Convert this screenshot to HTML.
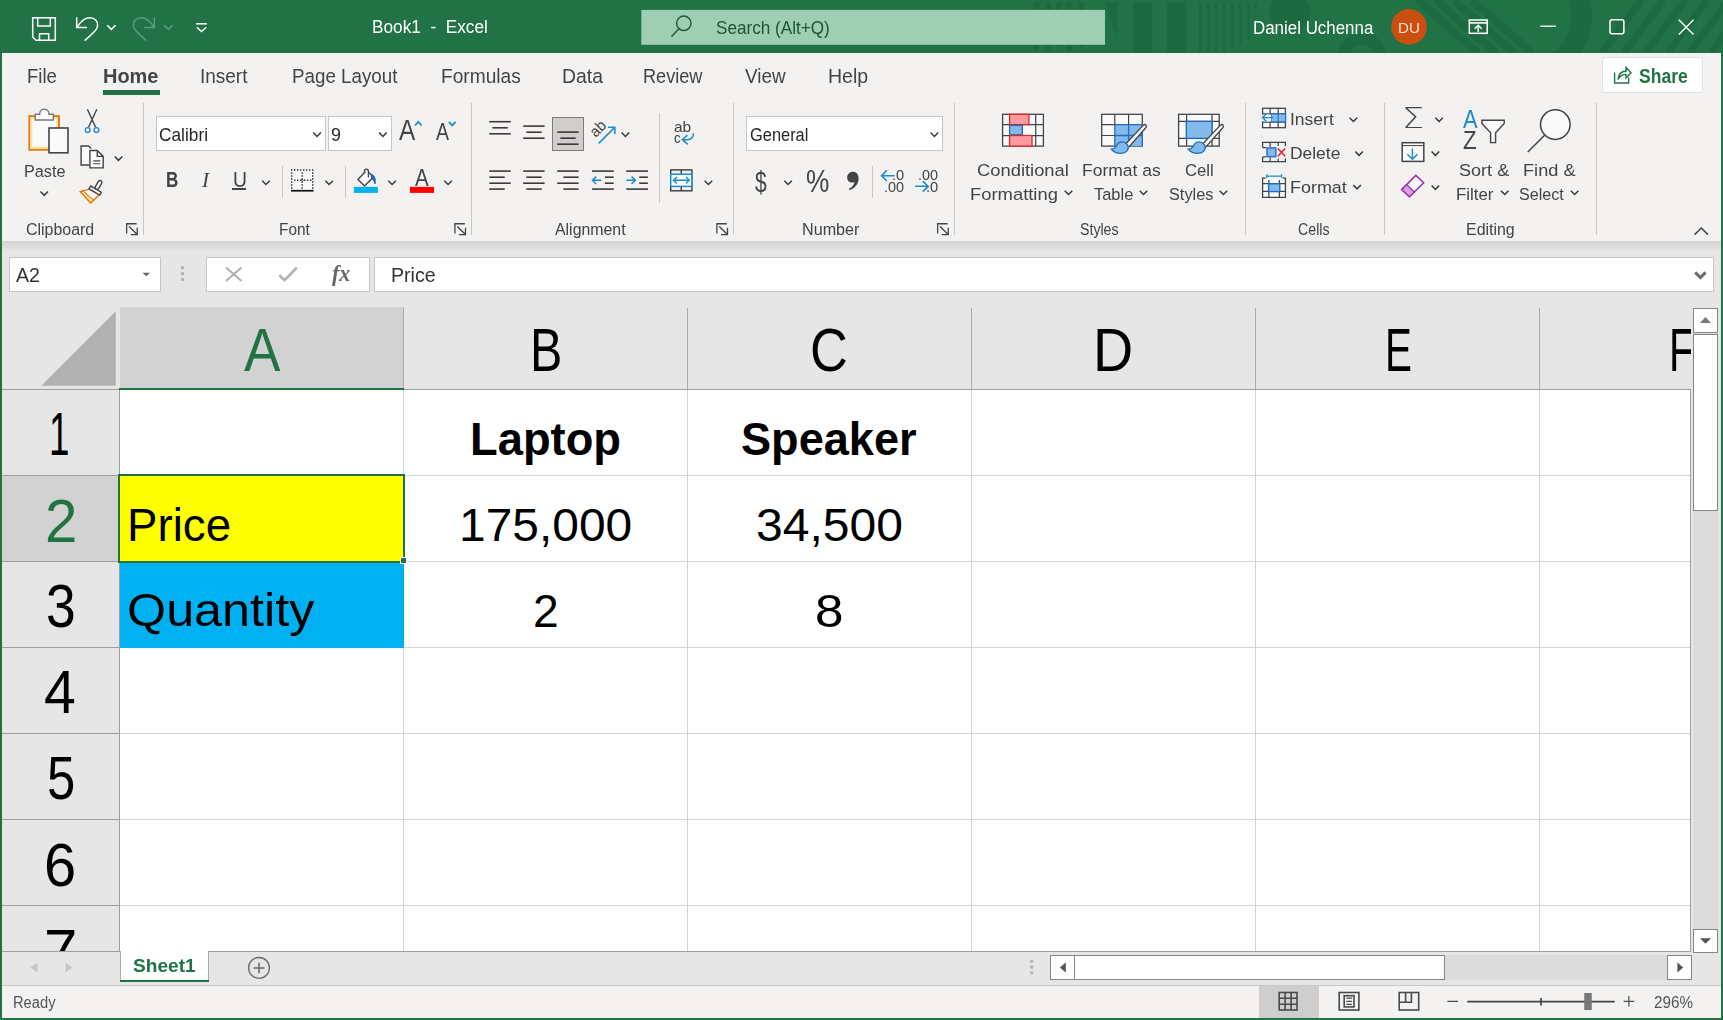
<!DOCTYPE html>
<html lang="en"><head><meta charset="utf-8"><title>Book1 - Excel</title>
<style>
html,body{margin:0;padding:0;}
body{width:1723px;height:1020px;overflow:hidden;position:relative;background:#e6e6e6;font-family:"Liberation Sans", sans-serif;}
.b{position:absolute;box-sizing:border-box;}
.t{position:absolute;white-space:pre;line-height:1;transform-origin:0 0;font-family:"Liberation Sans", sans-serif;}
svg.ov{position:absolute;left:0;top:0;}
.g{position:absolute;left:0;top:0;width:1723px;height:1020px;will-change:transform;}
</style></head><body>
<div class="b" style="left:0px;top:0px;width:1723px;height:53px;background:#217346;"></div>
<div class="b" style="left:0px;top:53px;width:1723px;height:188px;background:#f3f2f1;"></div>
<div class="b" style="left:0px;top:240.5px;width:1723px;height:10px;background:linear-gradient(#d2d2d2,#e6e6e6);"></div>
<div class="b" style="left:0px;top:250px;width:1723px;height:58px;background:#e6e6e6;"></div>
<div class="b" style="left:103px;top:90px;width:57px;height:5px;background:#217346;"></div>
<div class="b" style="left:1602px;top:57px;width:101px;height:36px;background:#ffffff;border:1px solid #e1dfdd;border-radius:3px;"></div>
<div class="b" style="left:143.0px;top:103px;width:1px;height:132px;background:#c8c6c4;"></div>
<div class="b" style="left:470.75px;top:103px;width:1px;height:132px;background:#c8c6c4;"></div>
<div class="b" style="left:732.75px;top:103px;width:1px;height:132px;background:#c8c6c4;"></div>
<div class="b" style="left:954.0px;top:103px;width:1px;height:132px;background:#c8c6c4;"></div>
<div class="b" style="left:1245.0px;top:103px;width:1px;height:132px;background:#c8c6c4;"></div>
<div class="b" style="left:1384.0px;top:103px;width:1px;height:132px;background:#c8c6c4;"></div>
<div class="b" style="left:1595.75px;top:103px;width:1px;height:132px;background:#c8c6c4;"></div>
<div class="b" style="left:156px;top:116px;width:170px;height:35px;background:#fff;border:1px solid #c8c6c4;"></div>
<div class="b" style="left:328px;top:116px;width:64px;height:35px;background:#fff;border:1px solid #c8c6c4;"></div>
<div class="b" style="left:232.1px;top:188.2px;width:13.9px;height:1.7px;background:#444444;"></div>
<div class="b" style="left:282px;top:166.25px;width:1px;height:31.25px;background:#c8c6c4;"></div>
<div class="b" style="left:345px;top:166.25px;width:1px;height:31.25px;background:#c8c6c4;"></div>
<div class="b" style="left:552px;top:117px;width:32px;height:34px;background:#d0cecc;border:1px solid #7d7b79;"></div>
<div class="b" style="left:659px;top:112.5px;width:1px;height:90px;background:#c8c6c4;"></div>
<div class="b" style="left:746px;top:116px;width:197px;height:35px;background:#fff;border:1px solid #c8c6c4;"></div>
<div class="b" style="left:872px;top:166.25px;width:1px;height:31.25px;background:#c8c6c4;"></div>
<div class="b" style="left:9px;top:257px;width:152px;height:35px;background:#fff;border:1px solid #c6c6c6;"></div>
<div class="b" style="left:206px;top:257px;width:164px;height:35px;background:#fff;border:1px solid #c6c6c6;"></div>
<div class="b" style="left:374px;top:257px;width:1340px;height:35px;background:#fff;border:1px solid #c6c6c6;"></div>
<div class="b" style="left:0px;top:307px;width:1723px;height:82px;background:#e6e6e6;"></div>
<div class="b" style="left:0px;top:389px;width:119px;height:563px;background:#e6e6e6;"></div>
<div class="b" style="left:119px;top:390px;width:1572px;height:561px;background:#fff;"></div>
<div class="b" style="left:119.5px;top:307px;width:284px;height:81px;background:#d2d2d2;"></div>
<div class="b" style="left:2px;top:476px;width:117px;height:85.5px;background:#d2d2d2;"></div>
<div class="b" style="left:403.0px;top:390px;width:1px;height:561px;background:#d4d4d4;"></div>
<div class="b" style="left:403.0px;top:307.5px;width:1px;height:82px;background:#ababab;"></div>
<div class="b" style="left:687.0px;top:390px;width:1px;height:561px;background:#d4d4d4;"></div>
<div class="b" style="left:687.0px;top:307.5px;width:1px;height:82px;background:#ababab;"></div>
<div class="b" style="left:971.0px;top:390px;width:1px;height:561px;background:#d4d4d4;"></div>
<div class="b" style="left:971.0px;top:307.5px;width:1px;height:82px;background:#ababab;"></div>
<div class="b" style="left:1255.0px;top:390px;width:1px;height:561px;background:#d4d4d4;"></div>
<div class="b" style="left:1255.0px;top:307.5px;width:1px;height:82px;background:#ababab;"></div>
<div class="b" style="left:1539.0px;top:390px;width:1px;height:561px;background:#d4d4d4;"></div>
<div class="b" style="left:1539.0px;top:307.5px;width:1px;height:82px;background:#ababab;"></div>
<div class="b" style="left:119px;top:474.8px;width:1572px;height:1px;background:#d4d4d4;"></div>
<div class="b" style="left:2px;top:474.8px;width:117px;height:1px;background:#9e9e9e;"></div>
<div class="b" style="left:119px;top:560.9px;width:1572px;height:1px;background:#d4d4d4;"></div>
<div class="b" style="left:2px;top:560.9px;width:117px;height:1px;background:#9e9e9e;"></div>
<div class="b" style="left:119px;top:646.9px;width:1572px;height:1px;background:#d4d4d4;"></div>
<div class="b" style="left:2px;top:646.9px;width:117px;height:1px;background:#9e9e9e;"></div>
<div class="b" style="left:119px;top:733.0px;width:1572px;height:1px;background:#d4d4d4;"></div>
<div class="b" style="left:2px;top:733.0px;width:117px;height:1px;background:#9e9e9e;"></div>
<div class="b" style="left:119px;top:819.0px;width:1572px;height:1px;background:#d4d4d4;"></div>
<div class="b" style="left:2px;top:819.0px;width:117px;height:1px;background:#9e9e9e;"></div>
<div class="b" style="left:119px;top:905.0px;width:1572px;height:1px;background:#d4d4d4;"></div>
<div class="b" style="left:2px;top:905.0px;width:117px;height:1px;background:#9e9e9e;"></div>
<div class="b" style="left:119.5px;top:476px;width:284.5px;height:86px;background:#ffff00;"></div>
<div class="b" style="left:119.5px;top:562px;width:284.5px;height:85.5px;background:#00b0f0;"></div>
<div class="b" style="left:2px;top:388.75px;width:1689px;height:1px;background:#9e9e9e;"></div>
<div class="b" style="left:118.75px;top:390px;width:1px;height:561px;background:#9e9e9e;"></div>
<div class="b" style="left:1690px;top:389px;width:1px;height:562.5px;background:#9e9e9e;"></div>
<div class="b" style="left:119.25px;top:387.5px;width:284.5px;height:2px;background:#217346;"></div>
<div class="b" style="left:118.25px;top:474.25px;width:286.25px;height:88.25px;border:2px solid #217346;"></div>
<div class="b" style="left:399.5px;top:557px;width:7px;height:7px;background:#217346;border:1px solid #fff;"></div>
<div class="b" style="left:0px;top:951.75px;width:1723px;height:34px;background:#e6e6e6;"></div>
<div class="b" style="left:2px;top:951px;width:1689px;height:1px;background:#9e9e9e;"></div>
<div class="b" style="left:120.25px;top:951px;width:88.5px;height:30.5px;background:#fff;border:1px solid #ababab;border-top:none;"></div>
<div class="b" style="left:120.25px;top:979.5px;width:88.5px;height:2px;background:#217346;"></div>
<div class="b" style="left:1050px;top:955px;width:642px;height:25px;background:#dcdcdc;"></div>
<div class="b" style="left:1050px;top:955px;width:25px;height:25px;background:#fff;border:1px solid #868686;"></div>
<div class="b" style="left:1074px;top:955px;width:371px;height:25px;background:#fff;border:1px solid #868686;"></div>
<div class="b" style="left:1667px;top:955px;width:25px;height:25px;background:#fff;border:1px solid #868686;"></div>
<div class="b" style="left:1691px;top:307px;width:29.5px;height:646px;background:#e6e6e6;"></div>
<div class="b" style="left:1693px;top:333px;width:25px;height:596px;background:#dcdcdc;"></div>
<div class="b" style="left:1693px;top:308px;width:25px;height:25px;background:#fff;border:1px solid #868686;"></div>
<div class="b" style="left:1693px;top:334px;width:25px;height:177px;background:#fff;border:1px solid #868686;"></div>
<div class="b" style="left:1693px;top:929px;width:25px;height:24px;background:#fff;border:1px solid #868686;"></div>
<div class="b" style="left:0px;top:985.5px;width:1723px;height:35px;background:#f3f2f1;"></div>
<div class="b" style="left:0px;top:985px;width:1723px;height:1px;background:#c8c8c8;"></div>
<div class="b" style="left:1259px;top:986px;width:60px;height:32px;background:#d0cecd;"></div>
<div class="b" style="left:0px;top:53px;width:2px;height:967px;background:#217346;"></div>
<div class="b" style="left:1720.5px;top:53px;width:2.5px;height:967px;background:#217346;"></div>
<div class="b" style="left:0px;top:1017.5px;width:1723px;height:2.5px;background:#217346;"></div>
<svg class="ov" width="1723" height="1020" viewBox="0 0 1723 1020">
<clipPath id="tb"><rect x="0" y="0" width="1723" height="53"/></clipPath>
<g clip-path="url(#tb)" fill="#1e6a40"><rect x="1034" y="2" width="5.4" height="49"/><rect x="1045.8" y="2" width="5" height="49"/><rect x="1056" y="2" width="5.6" height="44"/><rect x="1066.2" y="2" width="5.6" height="49"/><rect x="1078" y="2" width="5.9" height="45"/><path d="M1104.3,2 H1117.3 V38 Z"/><rect x="1133" y="2" width="19.2" height="51"/><rect x="1167" y="2" width="19" height="51"/><rect x="1199" y="2" width="2.8" height="51"/><rect x="1206.9" y="2" width="2.9" height="51"/><rect x="1214.8" y="2" width="2.8" height="51"/><rect x="1223" y="2" width="2.6" height="51"/><rect x="1231" y="2" width="2.7" height="47"/><rect x="1239" y="2" width="2.7" height="43"/><rect x="1247.2" y="2" width="2.5" height="38"/><rect x="1255" y="2" width="2.5" height="7"/><circle cx="1290" cy="12" r="20.4"/></g>
<g clip-path="url(#tb)" fill="none" stroke="#1e6a40"><circle cx="1362" cy="58" r="19" stroke-width="12"/><path d="M1418,0 l60,53 M1436,0 l60,53 M1454,0 l60,53 M1472,0 l60,53" stroke-width="8"/><path d="M1560.6,-28.8 A58.5,58.5 0 0 1 1560.6,60.8" stroke-width="21"/><path d="M1602,53 l39.75,-53 M1623.8,53 l39.75,-53 M1645.6,53 l39.75,-53 M1667.4,53 l39.75,-53 M1689.2,53 l39.75,-53 M1711,53 l39.75,-53" stroke-width="7.2"/></g>
<rect x="641.3" y="9.9" width="463.7" height="34.9" fill="#9fceb4"/>
<g fill="none" stroke="#ffffff" stroke-width="1.5"><path d="M32.7,17.7 H55.3 V40.3 H36 L32.7,37 Z"/><path d="M37.7,17.7 V26 H50.3 V17.7"/><path d="M39.5,40.3 V33.7 H48.7 V40.3"/><path d="M76.7,17.3 V27.5 H87"/><path d="M77.2,27 C80.5,21.5 85,17.7 90,17.7 C95,17.7 97.6,21.5 97.6,25.2 C97.6,28.8 95.5,31 84.6,40.6"/><path d="M107.2,25.2 L111.4,29.4 L115.6,25.2"/><path d="M196,23.8 H207"/><path d="M196.8,27.3 L201.5,31.6 L206.2,27.3"/></g>
<g fill="none" stroke="#5e9c7b" stroke-width="1.5"><path d="M154.3,17.3 V27.5 H144"/><path d="M153.8,27 C150.5,21.5 146,17.7 141,17.7 C136,17.7 133.4,21.5 133.4,25.2 C133.4,28.8 135.5,31 146.4,40.6"/><path d="M164.2,25.2 L168.4,29.4 L172.6,25.2"/></g>
<g fill="none" stroke="#1f5c3d" stroke-width="1.5"><circle cx="683.8" cy="23.3" r="7.2"/><path d="M678.9,28.7 L671.4,36.8"/></g>
<circle cx="1409" cy="26.9" r="17.8" fill="#c9500f"/>
<g fill="none" stroke="#ffffff" stroke-width="1.5"><rect x="1469.3" y="20" width="17.9" height="13.3"/><path d="M1469.3,22.9 H1487.2" stroke-width="1.6"/><path d="M1478.2,32 V25.6 M1474.7,28.7 L1478.2,25.3 L1481.7,28.7" stroke-width="1.4"/><path d="M1540.3,26.2 H1555.9" stroke-width="1.3"/><rect x="1610" y="19.8" width="13.9" height="14" rx="2"/><path d="M1678.8,19.7 L1693.5,34.4 M1693.5,19.7 L1678.8,34.4" stroke-width="1.4"/></g>
<g fill="none" stroke="#217346" stroke-width="1.4"><path d="M1614.6,72.6 V83 H1628.6 V77.4"/><path d="M1618,79.5 C1618.5,74 1621.5,71.3 1626,71.3 V67.6 L1631,72.8 L1626,78 V74.4 C1622.5,74.4 1620,75.8 1618,79.5 Z"/></g>
<g fill="none" stroke="#444444" stroke-width="1.3"><path d="M126.65,233.6 V223.75 H136.6"/><path d="M129,226.5 L137,234.3 M137.25,227.8 V234.55 H130.7"/></g>
<g fill="none" stroke="#444444" stroke-width="1.3"><path d="M454.9,233.6 V223.75 H464.85"/><path d="M457.25,226.5 L465.25,234.3 M465.5,227.8 V234.55 H458.95"/></g>
<g fill="none" stroke="#444444" stroke-width="1.3"><path d="M716.9,233.6 V223.75 H726.85"/><path d="M719.25,226.5 L727.25,234.3 M727.5,227.8 V234.55 H720.95"/></g>
<g fill="none" stroke="#444444" stroke-width="1.3"><path d="M937.65,233.6 V223.75 H947.6"/><path d="M940,226.5 L948,234.3 M948.25,227.8 V234.55 H941.7"/></g>
<rect x="29.4" y="116.1" width="29.5" height="33.6" fill="#fafafa" stroke="#e07c10" stroke-width="2"/><rect x="31.3" y="118" width="25.7" height="29.8" fill="none" stroke="#fbe19a" stroke-width="2"/><path d="M35.2,120 V114.2 H39.6 C39.6,107.5 49,107.5 49,114.2 H53.4 V120 Z" fill="#fafafa" stroke="#7a7a7a" stroke-width="1.4"/><rect x="49" y="128" width="19" height="24.8" fill="#fafafa" stroke="#444444" stroke-width="1.6"/>
<path d="M40.45,191.45 L44.25,195.35 L48.05,191.45" fill="none" stroke="#3b3a39" stroke-width="1.5"/>
<g fill="none" stroke="#444444" stroke-width="1.4"><path d="M87.4,109.2 L95.6,127.2 M96.8,109.2 L88.6,127.2"/></g><g fill="#fff" stroke="#1e8bcd" stroke-width="1.4"><circle cx="87.7" cy="130" r="2.4"/><circle cx="96.5" cy="130" r="2.4"/></g>
<g fill="#fafafa" stroke="#444444" stroke-width="1.4"><path d="M89.3,165 H81.1 V146 H88.5 L91,148.6"/><path d="M89.9,150.5 H97.3 L103.2,156.4 V167.9 H89.9 Z"/><path d="M97.3,150.5 V156.4 H103.2" fill="none"/><path d="M93.3,160.9 H100.2 M93.3,163.7 H100.2" stroke-width="1.1"/></g>
<path d="M114.70,156.45 L118.50,160.35 L122.30,156.45" fill="none" stroke="#3b3a39" stroke-width="1.5"/>
<g transform="translate(95.2,190.6) rotate(30.7)"><path d="M-5.7,1.6 L-12.2,8.4 L2.4,13 L5.6,1.6 Z" fill="#fafafa" stroke="#e07c10" stroke-width="1.4"/><path d="M-10.2,6.4 C-5,7.4 -1,9 3.6,8.6 L2.4,13 L-12.2,8.4 Z" fill="#fbe19a" stroke="#e07c10" stroke-width="1.2"/><rect x="-6.2" y="-1.7" width="12.4" height="3.3" fill="#fafafa" stroke="#444444" stroke-width="1.4"/><rect x="-1.9" y="-11.4" width="3.8" height="9.7" rx="1.9" fill="#fafafa" stroke="#444444" stroke-width="1.4"/></g>
<path d="M313.30,132.55 L317.10,136.45 L320.90,132.55" fill="none" stroke="#3b3a39" stroke-width="1.5"/>
<path d="M379.10,132.55 L382.90,136.45 L386.70,132.55" fill="none" stroke="#3b3a39" stroke-width="1.5"/>
<path d="M415,125.5 L418.3,121.9 L421.6,125.5" fill="none" stroke="#1e8bcd" stroke-width="1.8"/>
<path d="M448.9,121.8 L452.2,125.4 L455.5,121.8" fill="none" stroke="#1e8bcd" stroke-width="1.8"/>
<path d="M262.10,180.65 L265.90,184.55 L269.70,180.65" fill="none" stroke="#3b3a39" stroke-width="1.5"/>
<rect x="291.7" y="170" width="21" height="19" fill="#fafafa"/><g fill="none" stroke="#2b2b2b" stroke-width="1.4" stroke-dasharray="1.4 1.6"><path d="M291,170 H313.6 M291.7,172.3 V189.4 M312.7,172.3 V189.4 M302.2,172.3 V189.4 M294,180.2 H301 M304,180.2 H312"/></g><path d="M300.9,180.2 L302.2,178.9 L303.5,180.2 L302.2,181.5 Z" fill="none" stroke="#2b2b2b" stroke-width="0.8"/><path d="M291,190.75 H313.6" stroke="#111" stroke-width="1.7"/>
<path d="M325.30,180.65 L329.10,184.55 L332.90,180.65" fill="none" stroke="#3b3a39" stroke-width="1.5"/>
<path d="M365.3,171.8 L357.9,179.4 L364.5,186 L373.5,177 L369,172.5" fill="#fafafa" stroke="#444444" stroke-width="1.4" stroke-linejoin="round"/><path d="M364.4,172.8 V171.3 C364.4,168.4 368.4,168.4 368.4,171.3 V177.5" fill="none" stroke="#444444" stroke-width="1.3"/><path d="M371.1,174.4 C374.4,174.6 376.2,179.4 375,184 C374.2,181 373,179.2 371.5,178.4 Z" fill="#1565b8" stroke="#1565b8" stroke-width="0.8"/><rect x="353.9" y="186.9" width="24" height="6" fill="#00b0f0"/>
<path d="M388.30,180.65 L392.10,184.55 L395.90,180.65" fill="none" stroke="#3b3a39" stroke-width="1.5"/>
<rect x="409.9" y="186.9" width="24.2" height="6" fill="#ff0000"/>
<path d="M444.30,180.65 L448.10,184.55 L451.90,180.65" fill="none" stroke="#3b3a39" stroke-width="1.5"/>
<path d="M489.30,121.7 H510.70" stroke="#3b3a39" stroke-width="1.6"/>
<path d="M492.40,127.8 H507.81" stroke="#3b3a39" stroke-width="1.6"/>
<path d="M489.30,133.8 H510.70" stroke="#3b3a39" stroke-width="1.6"/>
<path d="M523.20,126.1 H544.60" stroke="#3b3a39" stroke-width="1.6"/>
<path d="M526.30,132.2 H541.71" stroke="#3b3a39" stroke-width="1.6"/>
<path d="M523.20,138.2 H544.60" stroke="#3b3a39" stroke-width="1.6"/>
<path d="M557.20,132.1 H578.60" stroke="#3b3a39" stroke-width="1.6"/>
<path d="M560.30,138.2 H575.71" stroke="#3b3a39" stroke-width="1.6"/>
<path d="M557.20,144.2 H578.60" stroke="#3b3a39" stroke-width="1.6"/>
<path d="M598.7,143.4 L614.7,127.4 M608,127.3 H614.9 V134" fill="none" stroke="#1e8bcd" stroke-width="1.5"/>
<g transform="translate(595.8,138) rotate(-45)"><text x="0" y="0" font-family="Liberation Sans, sans-serif" font-size="15.5" fill="#444" textLength="16.2" lengthAdjust="spacingAndGlyphs">ab</text></g>
<path d="M621.60,132.55 L625.40,136.45 L629.20,132.55" fill="none" stroke="#3b3a39" stroke-width="1.5"/>
<path d="M693.3,133.2 C693.6,137.6 691,139.7 687.4,139.7 H682.6 M687.4,135.1 L682.3,139.7 L687.8,144.3" fill="none" stroke="#1e8bcd" stroke-width="1.5"/>
<path d="M489.30,171.1 H510.70" stroke="#3b3a39" stroke-width="1.6"/>
<path d="M489.30,177.2 H504.71" stroke="#3b3a39" stroke-width="1.6"/>
<path d="M489.30,183.2 H510.70" stroke="#3b3a39" stroke-width="1.6"/>
<path d="M489.30,189.1 H504.71" stroke="#3b3a39" stroke-width="1.6"/>
<path d="M523.20,171.1 H544.60" stroke="#3b3a39" stroke-width="1.6"/>
<path d="M526.30,177.2 H541.71" stroke="#3b3a39" stroke-width="1.6"/>
<path d="M523.20,183.2 H544.60" stroke="#3b3a39" stroke-width="1.6"/>
<path d="M526.30,189.1 H541.71" stroke="#3b3a39" stroke-width="1.6"/>
<path d="M557.20,171.1 H578.60" stroke="#3b3a39" stroke-width="1.6"/>
<path d="M563.41,177.2 H578.60" stroke="#3b3a39" stroke-width="1.6"/>
<path d="M557.20,183.2 H578.60" stroke="#3b3a39" stroke-width="1.6"/>
<path d="M563.41,189.1 H578.60" stroke="#3b3a39" stroke-width="1.6"/>
<path d="M592.10,171.1 H613.70" stroke="#3b3a39" stroke-width="1.6"/>
<path d="M592.10,189.1 H613.70" stroke="#3b3a39" stroke-width="1.6"/>
<path d="M604.84,177.2 H613.70" stroke="#3b3a39" stroke-width="1.6"/>
<path d="M604.84,183.2 H613.70" stroke="#3b3a39" stroke-width="1.6"/>
<path d="M592.6,180.3 H601.3 M596.2,176.6 L592.5,180.3 L596.2,184" fill="none" stroke="#1e8bcd" stroke-width="1.5"/>
<path d="M626.30,171.1 H647.90" stroke="#3b3a39" stroke-width="1.6"/>
<path d="M626.30,189.1 H647.90" stroke="#3b3a39" stroke-width="1.6"/>
<path d="M639.26,177.2 H647.90" stroke="#3b3a39" stroke-width="1.6"/>
<path d="M639.26,183.2 H647.90" stroke="#3b3a39" stroke-width="1.6"/>
<path d="M626.4,180.3 H635.2 M631.6,176.6 L635.3,180.3 L631.6,184" fill="none" stroke="#1e8bcd" stroke-width="1.5"/>
<g fill="none" stroke="#3b3a39" stroke-width="1.4"><rect x="670.7" y="169.9" width="21.2" height="20.9"/><path d="M681.3,169.9 V174 M681.3,186.6 V190.8"/></g><rect x="670.7" y="174.2" width="21.2" height="12.2" fill="#fafafa" stroke="#1e8bcd" stroke-width="1.5"/><path d="M673.6,180.3 H689.2 M676.8,177 L673.4,180.3 L676.8,183.6 M686,177 L689.4,180.3 L686,183.6" fill="none" stroke="#1e8bcd" stroke-width="1.4"/>
<path d="M704.60,180.65 L708.40,184.55 L712.20,180.65" fill="none" stroke="#3b3a39" stroke-width="1.5"/>
<path d="M930.60,132.55 L934.40,136.45 L938.20,132.55" fill="none" stroke="#3b3a39" stroke-width="1.5"/>
<path d="M784.30,180.65 L788.10,184.55 L791.90,180.65" fill="none" stroke="#3b3a39" stroke-width="1.5"/>
<path transform="translate(1,-6.9) scale(1,1.04)" d="M851.9,171.8 C855.4,171.8 857.6,174.4 857.6,178.2 C857.6,183.4 854.4,187.4 848.4,189.4 L847.8,188.2 C851.4,186.4 853.2,184.2 853.4,181.6 C852.8,182 852,182.2 851.2,182.2 C848.2,182.2 846.2,180 846.2,177.2 C846.2,174.2 848.6,171.8 851.9,171.8 Z" fill="#444444"/>
<path d="M881.6,175.7 H894.6 M886.9,170.4 L881.5,175.7 L886.9,181" fill="none" stroke="#1e8bcd" stroke-width="1.6"/>
<path d="M915,186.3 H928 M922.8,181.2 L928.2,186.4 L922.8,191.6" fill="none" stroke="#1e8bcd" stroke-width="1.6"/>
<g fill="#fafafa" stroke="#444444" stroke-width="1.3"><rect x="1002.6" y="114.3" width="40.8" height="31.8"/><path d="M1009.6,114.3 V146.1 M1022.2,114.3 V146.1 M1035.7,114.3 V146.1 M1002.6,124.6 H1043.4 M1002.6,135.5 H1043.4" fill="none" stroke-width="1.25"/></g><rect x="1009.6" y="114.3" width="19.3" height="10.3" fill="#ff9aa2" stroke="#d92b2b" stroke-width="1.3"/><rect x="1009.6" y="125.4" width="12.6" height="9.4" fill="#83b9eb" stroke="#1e6fc0" stroke-width="1.3"/><rect x="1009.6" y="135.5" width="22.4" height="10.6" fill="#ff9aa2" stroke="#d92b2b" stroke-width="1.3"/>
<path d="M1064.70,190.65 L1068.50,194.55 L1072.30,190.65" fill="none" stroke="#3b3a39" stroke-width="1.5"/>
<g fill="#fafafa" stroke="#444444" stroke-width="1.3"><rect x="1101.7" y="114.3" width="40.6" height="31.8"/></g><rect x="1114.8" y="124.6" width="27.5" height="21.5" fill="#83b9eb"/><path d="M1114.8,124.6 H1142.3 M1114.8,135.5 H1142.3 M1114.8,124.6 V146.1 M1128.6,124.6 V146.1 M1142.3,124.6 V146.1" fill="none" stroke="#1e6fc0" stroke-width="1.3"/><path d="M1114.8,114.3 V124.6 M1128.6,114.3 V124.6 M1101.7,124.6 H1114.8 M1101.7,135.5 H1114.8" fill="none" stroke="#444444" stroke-width="1.2"/>
<g transform="translate(0,0)"><path d="M1123.5,146.2 L1143.2,125.4 C1145.2,123.4 1147.6,125.6 1145.8,127.8 L1127,149.2 Z" fill="#fafafa" stroke="#444444" stroke-width="1.3"/><path d="M1111.4,149.2 C1115.5,149 1115.8,147 1117.2,144.6 C1119.4,141 1124.4,141.2 1127,144.2 C1129.8,147.6 1127.6,152.6 1122.2,153.2 C1118,153.7 1114,152.2 1111.4,149.2 Z" fill="#83b9eb" stroke="#1e6fc0" stroke-width="1.3"/></g>
<path d="M1139.70,190.65 L1143.50,194.55 L1147.30,190.65" fill="none" stroke="#3b3a39" stroke-width="1.5"/>
<g fill="#fafafa" stroke="#444444" stroke-width="1.3"><rect x="1178.6" y="114.3" width="40.6" height="31.8"/><path d="M1186.6,114.3 V146.1 M1212,114.3 V146.1 M1178.6,121.4 H1219.2 M1178.6,138.4 H1219.2" fill="none" stroke-width="1.25"/></g><rect x="1186.3" y="121.4" width="25.7" height="17" fill="#83b9eb" stroke="#1e6fc0" stroke-width="1.3"/>
<g transform="translate(77,0)"><path d="M1123.5,146.2 L1143.2,125.4 C1145.2,123.4 1147.6,125.6 1145.8,127.8 L1127,149.2 Z" fill="#fafafa" stroke="#444444" stroke-width="1.3"/><path d="M1111.4,149.2 C1115.5,149 1115.8,147 1117.2,144.6 C1119.4,141 1124.4,141.2 1127,144.2 C1129.8,147.6 1127.6,152.6 1122.2,153.2 C1118,153.7 1114,152.2 1111.4,149.2 Z" fill="#83b9eb" stroke="#1e6fc0" stroke-width="1.3"/></g>
<path d="M1219.60,190.65 L1223.40,194.55 L1227.20,190.65" fill="none" stroke="#3b3a39" stroke-width="1.5"/>
<g fill="#fafafa" stroke="#444444" stroke-width="1.3"><rect x="1262.6" y="108.3" width="22.8" height="19.4"/><path d="M1270.1,108.3 V127.7 M1278.2,108.3 V127.7 M1262.6,113.9 H1285.4 M1262.6,122 H1285.4" fill="none" stroke-width="1.25"/></g><rect x="1271" y="113.9" width="14.6" height="8.1" fill="#83b9eb" stroke="#1e6fc0" stroke-width="1.2"/><path d="M1278.2,113.9 V122" stroke="#1e6fc0" stroke-width="1.1"/><rect x="1261.5" y="114.6" width="9.5" height="6.8" fill="#f3f2f1"/><path d="M1262.6,117.6 H1273 M1266.4,113.8 L1262.6,117.6 L1266.4,121.4" fill="none" stroke="#1e8bcd" stroke-width="1.4"/>
<path d="M1349.60,117.65 L1353.40,121.55 L1357.20,117.65" fill="none" stroke="#3b3a39" stroke-width="1.5"/>
<g fill="none" stroke="#444444" stroke-width="1.3"><path d="M1285.4,146 V142.4 H1262.6 V147.6 M1262.6,156.9 V161.6 H1285.4 V158.4"/><path d="M1270.1,142.4 V147 M1278.2,142.4 V146 M1270.1,157.4 V161.6 M1278.2,158.4 V161.6 M1262.6,147.6 H1266 M1262.6,156.9 H1266" stroke-width="1.25"/></g><rect x="1267" y="147.9" width="8.8" height="8.8" fill="#83b9eb" stroke="#1e6fc0" stroke-width="1.4"/><path d="M1277.8,148.4 L1285.2,156.2 M1285.2,148.4 L1277.8,156.2" stroke="#e8212b" stroke-width="1.5" fill="none"/>
<path d="M1355.30,151.45 L1359.10,155.35 L1362.90,151.45" fill="none" stroke="#3b3a39" stroke-width="1.5"/>
<path d="M1266.8,176.1 H1281.6 M1266.8,174.2 V178 M1281.6,174.2 V178" fill="none" stroke="#1e8bcd" stroke-width="1.3"/><g fill="#fafafa" stroke="#444444" stroke-width="1.3"><path d="M1265.6,178.2 H1262.6 V197.3 H1285.4 V178.2 H1282.8" /><path d="M1268.9,180 V197.3 M1279.4,180 V197.3 M1262.6,183.6 H1285.4 M1262.6,191.4 H1285.4" fill="none" stroke-width="1.25"/></g><rect x="1268.6" y="183.8" width="11.2" height="7.8" fill="#83b9eb" stroke="#1e6fc0" stroke-width="1.4"/>
<path d="M1353.30,184.95 L1357.10,188.85 L1360.90,184.95" fill="none" stroke="#3b3a39" stroke-width="1.5"/>
<path d="M1435.30,117.65 L1439.10,121.55 L1442.90,117.65" fill="none" stroke="#3b3a39" stroke-width="1.5"/>
<g fill="#fafafa" stroke="#444444" stroke-width="1.5"><rect x="1402.2" y="142.7" width="21.6" height="18.7"/><path d="M1402.2,145.6 H1423.8" stroke-width="1"/></g><path d="M1412.4,148.6 V159 M1407.4,154.2 L1412.4,159.3 L1417.4,154.2" fill="none" stroke="#1e8bcd" stroke-width="1.5"/>
<path d="M1431.60,151.45 L1435.40,155.35 L1439.20,151.45" fill="none" stroke="#3b3a39" stroke-width="1.5"/>
<path d="M1415.8,175.4 L1423.7,182.8 L1409.4,196.7 L1401.7,189.6 Z" fill="#fafafa" stroke="#9b2fae" stroke-width="1.5"/><path d="M1406.6,184.6 L1414.4,192.1 L1409.4,196.7 L1401.7,189.6 Z" fill="#d7a0df" stroke="#9b2fae" stroke-width="1.3"/>
<path d="M1431.60,185.45 L1435.40,189.35 L1439.20,185.45" fill="none" stroke="#3b3a39" stroke-width="1.5"/>
<path d="M1481.9,120.2 H1504.2 V123.4 L1495.6,132.8 V142.6 H1490.6 V132.8 L1481.9,123.4 Z" fill="#fafafa" stroke="#444444" stroke-width="1.4"/>
<path d="M1500.95,190.65 L1504.75,194.55 L1508.55,190.65" fill="none" stroke="#3b3a39" stroke-width="1.5"/>
<circle cx="1555.3" cy="124.6" r="14.8" fill="#fafafa" stroke="#444444" stroke-width="1.5"/><path d="M1544.6,135.2 L1527.8,152" stroke="#444444" stroke-width="1.5"/>
<path d="M1570.80,190.65 L1574.60,194.55 L1578.40,190.65" fill="none" stroke="#3b3a39" stroke-width="1.5"/>
<path d="M1694.6,234.6 L1701.3,228 L1708,234.6" fill="none" stroke="#444444" stroke-width="1.5"/>
<path d="M142.5,272.7 H150 L146.25,276.3 Z" fill="#666"/>
<rect x="181" y="266.3" width="3" height="3" fill="#b4b4b4"/>
<rect x="181" y="272.2" width="3" height="3" fill="#b4b4b4"/>
<rect x="181" y="278" width="3" height="3" fill="#b4b4b4"/>
<path d="M226,267.5 L241.5,281 M241.5,267.5 L226,281" stroke="#b0b0b0" stroke-width="2" fill="none"/>
<path d="M279.4,275.2 L284.6,280.2 L296.8,267.6" stroke="#b0b0b0" stroke-width="2.6" fill="none"/>
<path d="M1695.2,272.4 L1700.4,277.6 L1705.6,272.4" fill="none" stroke="#6e6e6e" stroke-width="3"/>
<path d="M41.25,385.75 H115.75 V311.25 Z" fill="#b1b1b1"/>
<path d="M37.5,962.5 V972.5 L30.5,967.5 Z M65.5,962.5 V972.5 L72.5,967.5 Z" fill="#c6c6c6"/>
<circle cx="259" cy="967.9" r="10.4" fill="none" stroke="#6a6a6a" stroke-width="1.3"/><path d="M253.6,967.9 H264.4 M259,962.5 V973.3" stroke="#6a6a6a" stroke-width="1.5"/>
<rect x="1030.2" y="959.8" width="3" height="3" fill="#b4b4b4"/>
<rect x="1030.2" y="965.6" width="3" height="3" fill="#b4b4b4"/>
<rect x="1030.2" y="971.4" width="3" height="3" fill="#b4b4b4"/>
<path d="M1065.8,962.5 V972.5 L1059.8,967.5 Z" fill="#555"/>
<path d="M1677.4,962.5 V972.5 L1683.2,967.5 Z" fill="#555"/>
<path d="M1700,323 L1705.5,317 L1711,323 Z" fill="#777"/>
<path d="M1700,938.3 H1711 L1705.5,943.8 Z" fill="#555"/>
<g fill="none" stroke="#4a4a4a" stroke-width="1.6"><rect x="1279.2" y="992.5" width="17.8" height="17.5"/><path d="M1285.1,992.5 V1010 M1291.1,992.5 V1010 M1279.2,998.3 H1297 M1279.2,1004.2 H1297"/><rect x="1339.2" y="992.5" width="19.7" height="17.5"/><rect x="1344.2" y="995.7" width="9.8" height="11.2"/><path d="M1346.4,998.2 H1351.9 M1346.4,1001.3 H1351.9 M1346.4,1004.4 H1351.9" stroke-width="1.2"/><rect x="1399.2" y="992.5" width="19.5" height="17.5"/><path d="M1399.2,1002.2 H1411.4 V992.5 M1405.6,992.5 V1002.2" /></g>
<path d="M1447.4,1001.3 H1458 M1623.6,1001.3 H1634.2 M1628.9,996 V1006.6" stroke="#4a4a4a" stroke-width="1.2" fill="none"/><path d="M1467.25,1001.6 H1614.75 M1541,998 V1005.5" stroke="#444" stroke-width="1.7" fill="none"/><rect x="1584.25" y="993" width="7.5" height="17" fill="#777"/>
</svg>
<span class="t" style="left:243.75px;top:320.00px;font-size:61px;color:#217346;transform:scaleX(0.8963);">A</span>
<span class="t" style="left:529.77px;top:320.00px;font-size:61px;color:#000;transform:scaleX(0.7955);">B</span>
<span class="t" style="left:809.92px;top:320.00px;font-size:61px;color:#000;transform:scaleX(0.8590);">C</span>
<span class="t" style="left:1092.94px;top:320.00px;font-size:61px;color:#000;transform:scaleX(0.9122);">D</span>
<span class="t" style="left:1384.69px;top:320.00px;font-size:61px;color:#000;transform:scaleX(0.6618);">E</span>
<div class="b" style="left:1600px;top:308px;width:90.5px;height:80px;overflow:hidden"><span class="t" style="left:69.17px;top:12.00px;font-size:61px;color:#000;transform:scaleX(0.6667);">F</span></div>
<span class="t" style="left:48.84px;top:404.00px;font-size:61px;color:#000;transform:scaleX(0.6019);">1</span>
<span class="t" style="left:44.63px;top:491.00px;font-size:61px;color:#217346;transform:scaleX(0.9554);">2</span>
<span class="t" style="left:45.75px;top:576.00px;font-size:61px;color:#000;transform:scaleX(0.8750);">3</span>
<span class="t" style="left:44.06px;top:662.00px;font-size:61px;color:#000;transform:scaleX(0.9375);">4</span>
<span class="t" style="left:47.08px;top:748.00px;font-size:61px;color:#000;transform:scaleX(0.8333);">5</span>
<span class="t" style="left:44.16px;top:835.00px;font-size:61px;color:#000;transform:scaleX(0.9483);">6</span>
<div class="b" style="left:2px;top:906px;width:117px;height:45.2px;overflow:hidden"><span class="t" style="left:42.05px;top:15.00px;font-size:61px;color:#000;transform:scaleX(0.9821);">7</span></div>
<span class="t" style="left:127.09px;top:501.00px;font-size:47px;color:#000;transform:scaleX(0.9714);">Price</span>
<span class="t" style="left:126.61px;top:586.00px;font-size:47px;color:#000;transform:scaleX(1.0704);">Quantity</span>
<span class="t" style="left:469.54px;top:416.00px;font-size:46px;color:#000;font-weight:700;transform:scaleX(0.9853);">Laptop</span>
<span class="t" style="left:741.02px;top:416.00px;font-size:46px;color:#000;font-weight:700;transform:scaleX(0.9808);">Speaker</span>
<span class="t" style="left:458.91px;top:502.00px;font-size:46.5px;color:#000;transform:scaleX(1.0306);">175,000</span>
<span class="t" style="left:756.47px;top:502.00px;font-size:46.5px;color:#000;transform:scaleX(1.0330);">34,500</span>
<span class="t" style="left:532.51px;top:588.00px;font-size:46.5px;color:#000;transform:scaleX(0.9955);">2</span>
<span class="t" style="left:814.80px;top:588.00px;font-size:46.5px;color:#000;transform:scaleX(1.1000);">8</span>
<div class="g">
<span class="t" style="left:372.12px;top:19.00px;font-size:17.5px;color:#ffffff;transform:scaleX(0.9844);">Book1  -  Excel</span>
<span class="t" style="left:715.60px;top:19.00px;font-size:18.5px;color:#1b5536;transform:scaleX(0.9258);">Search (Alt+Q)</span>
<span class="t" style="left:1253.43px;top:20.00px;font-size:17.5px;color:#ffffff;transform:scaleX(0.9661);">Daniel Uchenna</span>
<span class="t" style="left:1397.95px;top:20.58px;font-size:16px;color:#f9ddd0;transform:scale(0.9464,0.94);">DU</span>
<span class="t" style="left:27.06px;top:67.00px;font-size:19.7px;color:#444444;transform:scaleX(0.9424);">File</span>
<span class="t" style="left:102.74px;top:67.00px;font-size:19.7px;color:#444444;font-weight:700;transform:scaleX(1.0140);">Home</span>
<span class="t" style="left:199.54px;top:67.00px;font-size:19.7px;color:#444444;transform:scaleX(0.9637);">Insert</span>
<span class="t" style="left:291.55px;top:67.00px;font-size:19.7px;color:#444444;transform:scaleX(0.9538);">Page Layout</span>
<span class="t" style="left:440.78px;top:67.00px;font-size:19.7px;color:#444444;transform:scaleX(0.9729);">Formulas</span>
<span class="t" style="left:561.52px;top:67.00px;font-size:19.7px;color:#444444;transform:scaleX(0.9843);">Data</span>
<span class="t" style="left:642.83px;top:67.00px;font-size:19.7px;color:#444444;transform:scaleX(0.9210);">Review</span>
<span class="t" style="left:745.00px;top:67.00px;font-size:19.7px;color:#444444;transform:scaleX(0.9571);">View</span>
<span class="t" style="left:827.76px;top:67.00px;font-size:19.7px;color:#444444;transform:scaleX(0.9926);">Help</span>
<span class="t" style="left:1639.25px;top:67.00px;font-size:19.7px;color:#217346;font-weight:700;transform:scaleX(0.8901);">Share</span>
<span class="t" style="left:26.25px;top:222.00px;font-size:15.6px;color:#444444;transform:scaleX(1.0216);">Clipboard</span>
<span class="t" style="left:278.51px;top:222.00px;font-size:15.6px;color:#444444;transform:scaleX(0.9880);">Font</span>
<span class="t" style="left:554.50px;top:222.00px;font-size:15.6px;color:#444444;transform:scaleX(1.0177);">Alignment</span>
<span class="t" style="left:801.76px;top:222.00px;font-size:15.6px;color:#444444;transform:scaleX(1.0356);">Number</span>
<span class="t" style="left:1079.50px;top:222.00px;font-size:15.6px;color:#444444;transform:scaleX(0.9082);">Styles</span>
<span class="t" style="left:1298.25px;top:222.00px;font-size:15.6px;color:#444444;transform:scaleX(0.9107);">Cells</span>
<span class="t" style="left:1465.73px;top:222.00px;font-size:15.6px;color:#444444;transform:scaleX(1.0216);">Editing</span>
<span class="t" style="left:24.06px;top:163.00px;font-size:17.2px;color:#444444;transform:scaleX(0.9436);">Paste</span>
<span class="t" style="left:159.40px;top:127.00px;font-size:17.7px;color:#262626;transform:scaleX(0.9777);">Calibri</span>
<span class="t" style="left:331.30px;top:127.00px;font-size:17.7px;color:#262626;transform:scaleX(1.0111);">9</span>
<span class="t" style="left:399.30px;top:116.00px;font-size:29px;color:#444444;transform:scaleX(0.8400);">A</span>
<span class="t" style="left:436.00px;top:121.00px;font-size:22.5px;color:#444444;transform:scale(0.8667,1.05);">A</span>
<span class="t" style="left:166.11px;top:170.00px;font-size:21.5px;color:#444444;font-weight:700;transform:scaleX(0.7929);">B</span>
<span class="t" style="left:202.37px;top:169.00px;font-size:22px;color:#444444;font-style:italic;font-family:'Liberation Serif', serif;transform:scaleX(0.9700);">I</span>
<span class="t" style="left:232.60px;top:170.00px;font-size:21.5px;color:#444444;transform:scaleX(0.9000);">U</span>
<span class="t" style="left:415.10px;top:167.00px;font-size:23px;color:#444444;transform:scaleX(0.8937);">A</span>
<span class="t" style="left:673.80px;top:120.00px;font-size:14.5px;color:#444444;transform:scaleX(1.0645);">ab</span>
<span class="t" style="left:673.90px;top:131.00px;font-size:14.5px;color:#444444;transform:scaleX(0.9143);">c</span>
<span class="t" style="left:749.50px;top:127.00px;font-size:17.7px;color:#262626;transform:scaleX(0.9275);">General</span>
<span class="t" style="left:755.20px;top:168.00px;font-size:29px;color:#444444;transform:scaleX(0.7250);">$</span>
<span class="t" style="left:806.05px;top:167.00px;font-size:30.8px;color:#444444;transform:scaleX(0.8538);">%</span>
<span class="t" style="left:891.89px;top:168.00px;font-size:14.5px;color:#444444;transform:scaleX(1.0065);">.0</span>
<span class="t" style="left:884.00px;top:180.00px;font-size:14.5px;color:#444444;transform:scaleX(0.9951);">.00</span>
<span class="t" style="left:918.11px;top:168.00px;font-size:14.5px;color:#444444;transform:scaleX(0.9899);">.00</span>
<span class="t" style="left:925.78px;top:180.00px;font-size:14.5px;color:#444444;transform:scaleX(1.0155);">.0</span>
<span class="t" style="left:977.00px;top:162.00px;font-size:17.2px;color:#444444;transform:scaleX(1.0684);">Conditional</span>
<span class="t" style="left:969.68px;top:186.00px;font-size:17.2px;color:#444444;transform:scaleX(1.0703);">Formatting</span>
<span class="t" style="left:1081.98px;top:162.00px;font-size:17.2px;color:#444444;transform:scaleX(1.0163);">Format as</span>
<span class="t" style="left:1093.75px;top:186.00px;font-size:17.2px;color:#444444;transform:scaleX(0.9561);">Table</span>
<span class="t" style="left:1185.00px;top:162.00px;font-size:17.2px;color:#444444;transform:scaleX(0.9726);">Cell</span>
<span class="t" style="left:1168.75px;top:186.00px;font-size:17.2px;color:#444444;transform:scaleX(0.9468);">Styles</span>
<span class="t" style="left:1289.73px;top:111.00px;font-size:17.2px;color:#444444;transform:scaleX(1.0187);">Insert</span>
<span class="t" style="left:1289.74px;top:145.00px;font-size:17.2px;color:#444444;transform:scaleX(1.0130);">Delete</span>
<span class="t" style="left:1289.71px;top:179.00px;font-size:17.2px;color:#444444;transform:scaleX(1.0437);">Format</span>
<span class="t" style="left:1401.64px;top:105.00px;font-size:27.5px;color:#444444;font-weight:200;font-family:'DejaVu Sans', sans-serif;transform:scaleX(1.2786);">Σ</span>
<span class="t" style="left:1463.10px;top:107.00px;font-size:25.2px;color:#1e8bcd;transform:scaleX(0.8706);">A</span>
<span class="t" style="left:1463.30px;top:128.00px;font-size:25.2px;color:#444444;transform:scaleX(0.8867);">Z</span>
<span class="t" style="left:1458.75px;top:162.00px;font-size:17.2px;color:#444444;transform:scaleX(1.0508);">Sort &amp;</span>
<span class="t" style="left:1456.02px;top:186.00px;font-size:17.2px;color:#444444;transform:scaleX(0.9808);">Filter</span>
<span class="t" style="left:1522.69px;top:162.00px;font-size:17.2px;color:#444444;transform:scaleX(1.0567);">Find &amp;</span>
<span class="t" style="left:1518.75px;top:186.00px;font-size:17.2px;color:#444444;transform:scaleX(0.9376);">Select</span>
<span class="t" style="left:16.20px;top:266.00px;font-size:19.5px;color:#333;transform:scaleX(1.0041);">A2</span>
<span class="t" style="left:332.30px;top:261.00px;font-size:24px;color:#666;font-weight:700;font-style:italic;font-family:'Liberation Serif', serif;transform:scaleX(0.9154);">fx</span>
<span class="t" style="left:390.69px;top:266.00px;font-size:19.5px;color:#333;transform:scaleX(1.0051);">Price</span>
<span class="t" style="left:132.50px;top:957.00px;font-size:18.2px;color:#217346;font-weight:700;transform:scaleX(1.0499);">Sheet1</span>
<span class="t" style="left:13.38px;top:995.00px;font-size:16px;color:#555;transform:scaleX(0.9193);">Ready</span>
<span class="t" style="left:1653.75px;top:995.00px;font-size:16px;color:#555;transform:scaleX(0.9522);">296%</span>
</div>
</body></html>
